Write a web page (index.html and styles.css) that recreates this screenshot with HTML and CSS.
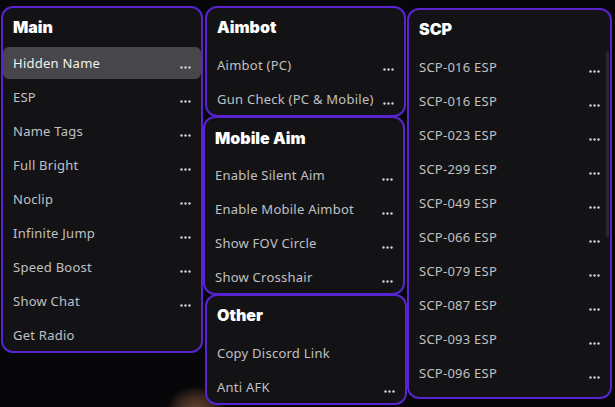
FILE: index.html
```html
<!DOCTYPE html>
<html lang="en">
<head>
    <meta charset="UTF-8">
    <title>Menu</title>
    <link rel="stylesheet" href="styles.css">
</head>
<body>
    <div class="menu">
        <div class="panel panel-main">
            <h3>Main</h3>
            <div class="opt active"><span>Hidden Name</span><svg class="more" viewBox="0 0 11 3"><circle cx="1.5" cy="1.5" r="1.2"/><circle cx="5.5" cy="1.5" r="1.2"/><circle cx="9.5" cy="1.5" r="1.2"/></svg></div>
            <div class="opt"><span>ESP</span><svg class="more" viewBox="0 0 11 3"><circle cx="1.5" cy="1.5" r="1.2"/><circle cx="5.5" cy="1.5" r="1.2"/><circle cx="9.5" cy="1.5" r="1.2"/></svg></div>
            <div class="opt"><span>Name Tags</span><svg class="more" viewBox="0 0 11 3"><circle cx="1.5" cy="1.5" r="1.2"/><circle cx="5.5" cy="1.5" r="1.2"/><circle cx="9.5" cy="1.5" r="1.2"/></svg></div>
            <div class="opt"><span>Full Bright</span><svg class="more" viewBox="0 0 11 3"><circle cx="1.5" cy="1.5" r="1.2"/><circle cx="5.5" cy="1.5" r="1.2"/><circle cx="9.5" cy="1.5" r="1.2"/></svg></div>
            <div class="opt"><span>Noclip</span><svg class="more" viewBox="0 0 11 3"><circle cx="1.5" cy="1.5" r="1.2"/><circle cx="5.5" cy="1.5" r="1.2"/><circle cx="9.5" cy="1.5" r="1.2"/></svg></div>
            <div class="opt"><span>Infinite Jump</span><svg class="more" viewBox="0 0 11 3"><circle cx="1.5" cy="1.5" r="1.2"/><circle cx="5.5" cy="1.5" r="1.2"/><circle cx="9.5" cy="1.5" r="1.2"/></svg></div>
            <div class="opt"><span>Speed Boost</span><svg class="more" viewBox="0 0 11 3"><circle cx="1.5" cy="1.5" r="1.2"/><circle cx="5.5" cy="1.5" r="1.2"/><circle cx="9.5" cy="1.5" r="1.2"/></svg></div>
            <div class="opt"><span>Show Chat</span><svg class="more" viewBox="0 0 11 3"><circle cx="1.5" cy="1.5" r="1.2"/><circle cx="5.5" cy="1.5" r="1.2"/><circle cx="9.5" cy="1.5" r="1.2"/></svg></div>
            <div class="opt"><span>Get Radio</span></div>
        </div>

        <div class="col">
            <div class="panel panel-aimbot">
                <h3>Aimbot</h3>
                <div class="opt"><span>Aimbot (PC)</span><svg class="more" viewBox="0 0 11 3"><circle cx="1.5" cy="1.5" r="1.2"/><circle cx="5.5" cy="1.5" r="1.2"/><circle cx="9.5" cy="1.5" r="1.2"/></svg></div>
                <div class="opt"><span>Gun Check (PC &amp; Mobile)</span><svg class="more" viewBox="0 0 11 3"><circle cx="1.5" cy="1.5" r="1.2"/><circle cx="5.5" cy="1.5" r="1.2"/><circle cx="9.5" cy="1.5" r="1.2"/></svg></div>
            </div>
            <div class="panel panel-mobile">
                <h3>Mobile Aim</h3>
                <div class="opt"><span>Enable Silent Aim</span><svg class="more" viewBox="0 0 11 3"><circle cx="1.5" cy="1.5" r="1.2"/><circle cx="5.5" cy="1.5" r="1.2"/><circle cx="9.5" cy="1.5" r="1.2"/></svg></div>
                <div class="opt"><span>Enable Mobile Aimbot</span><svg class="more" viewBox="0 0 11 3"><circle cx="1.5" cy="1.5" r="1.2"/><circle cx="5.5" cy="1.5" r="1.2"/><circle cx="9.5" cy="1.5" r="1.2"/></svg></div>
                <div class="opt"><span>Show FOV Circle</span><svg class="more" viewBox="0 0 11 3"><circle cx="1.5" cy="1.5" r="1.2"/><circle cx="5.5" cy="1.5" r="1.2"/><circle cx="9.5" cy="1.5" r="1.2"/></svg></div>
                <div class="opt"><span>Show Crosshair</span><svg class="more" viewBox="0 0 11 3"><circle cx="1.5" cy="1.5" r="1.2"/><circle cx="5.5" cy="1.5" r="1.2"/><circle cx="9.5" cy="1.5" r="1.2"/></svg></div>
            </div>
            <div class="panel panel-other">
                <h3>Other</h3>
                <div class="opt"><span>Copy Discord Link</span></div>
                <div class="opt"><span>Anti AFK</span><svg class="more" viewBox="0 0 11 3"><circle cx="1.5" cy="1.5" r="1.2"/><circle cx="5.5" cy="1.5" r="1.2"/><circle cx="9.5" cy="1.5" r="1.2"/></svg></div>
            </div>
        </div>

        <div class="panel panel-scp">
            <h3>SCP</h3>
            <div class="opt"><span>SCP-016 ESP</span><svg class="more" viewBox="0 0 11 3"><circle cx="1.5" cy="1.5" r="1.2"/><circle cx="5.5" cy="1.5" r="1.2"/><circle cx="9.5" cy="1.5" r="1.2"/></svg></div>
            <div class="opt"><span>SCP-016 ESP</span><svg class="more" viewBox="0 0 11 3"><circle cx="1.5" cy="1.5" r="1.2"/><circle cx="5.5" cy="1.5" r="1.2"/><circle cx="9.5" cy="1.5" r="1.2"/></svg></div>
            <div class="opt"><span>SCP-023 ESP</span><svg class="more" viewBox="0 0 11 3"><circle cx="1.5" cy="1.5" r="1.2"/><circle cx="5.5" cy="1.5" r="1.2"/><circle cx="9.5" cy="1.5" r="1.2"/></svg></div>
            <div class="opt"><span>SCP-299 ESP</span><svg class="more" viewBox="0 0 11 3"><circle cx="1.5" cy="1.5" r="1.2"/><circle cx="5.5" cy="1.5" r="1.2"/><circle cx="9.5" cy="1.5" r="1.2"/></svg></div>
            <div class="opt"><span>SCP-049 ESP</span><svg class="more" viewBox="0 0 11 3"><circle cx="1.5" cy="1.5" r="1.2"/><circle cx="5.5" cy="1.5" r="1.2"/><circle cx="9.5" cy="1.5" r="1.2"/></svg></div>
            <div class="opt"><span>SCP-066 ESP</span><svg class="more" viewBox="0 0 11 3"><circle cx="1.5" cy="1.5" r="1.2"/><circle cx="5.5" cy="1.5" r="1.2"/><circle cx="9.5" cy="1.5" r="1.2"/></svg></div>
            <div class="opt"><span>SCP-079 ESP</span><svg class="more" viewBox="0 0 11 3"><circle cx="1.5" cy="1.5" r="1.2"/><circle cx="5.5" cy="1.5" r="1.2"/><circle cx="9.5" cy="1.5" r="1.2"/></svg></div>
            <div class="opt"><span>SCP-087 ESP</span><svg class="more" viewBox="0 0 11 3"><circle cx="1.5" cy="1.5" r="1.2"/><circle cx="5.5" cy="1.5" r="1.2"/><circle cx="9.5" cy="1.5" r="1.2"/></svg></div>
            <div class="opt"><span>SCP-093 ESP</span><svg class="more" viewBox="0 0 11 3"><circle cx="1.5" cy="1.5" r="1.2"/><circle cx="5.5" cy="1.5" r="1.2"/><circle cx="9.5" cy="1.5" r="1.2"/></svg></div>
            <div class="opt"><span>SCP-096 ESP</span><svg class="more" viewBox="0 0 11 3"><circle cx="1.5" cy="1.5" r="1.2"/><circle cx="5.5" cy="1.5" r="1.2"/><circle cx="9.5" cy="1.5" r="1.2"/></svg></div>
            <div class="scrollbar"></div>
        </div>
    </div>
</body>
</html>
```

FILE: styles.css
```css
body {
    margin: 0;
    font-family: 'Noto Sans', 'DejaVu Sans', sans-serif;
    background: radial-gradient(ellipse 30px 26px at 196px 412px, #6b4a36 0%, #3a281e 60%, rgba(7,7,9,0) 100%), #070709;
    height: 407px;
    overflow: hidden;
}
.menu {
    display: flex;
    align-items: flex-start;
    padding-left: 1px;
}
.col {
    display: flex;
    flex-direction: column;
    width: 204px;
}
.panel {
    box-sizing: border-box;
    display: flex;
    flex-direction: column;
    gap: 2px;
    background: #131316;
    border: 2px solid #5824d0;
    border-radius: 12px;
    position: relative;
}
h3 {
    margin: 0 0 10px 0;
    padding: 9px 10px 0 10px;
    line-height: 20px;
    height: 20px;
    font-family: Inter, 'Noto Sans', sans-serif;
    font-weight: 900;
    font-size: 16px;
    color: #fff;
}
.panel-main {
    width: 202px;
    margin-top: 6px;
}
.panel-main h3 {
    margin-bottom: 8px;
}
.panel-aimbot {
    width: 201px;
    margin: 6px 0 0 2px;
}
.panel-mobile {
    width: 202px;
    margin-top: -1px;
}
.panel-mobile h3 {
    padding-top: 10px;
    margin-bottom: 9px;
}
.panel-other {
    width: 202px;
    margin: -1px 0 0 2px;
}
.panel-scp {
    width: 205px;
    margin-top: 8px;
    padding-bottom: 8px;
}
.opt {
    display: flex;
    align-items: center;
    justify-content: space-between;
    height: 32px;
    padding: 0 10px 0 10px;
    font-size: 13px;
    letter-spacing: 0.25px;
    color: #c0c0c3;
    border-radius: 6px;
}
.opt.active {
    background: #47474b;
    color: #f2f2f2;
}
.more {
    width: 11px;
    height: 3px;
    fill: #d2d2d4;
    margin-top: 8px;
    flex-shrink: 0;
}
.scrollbar {
    position: absolute;
    right: 1px;
    top: 41px;
    width: 3px;
    height: 186px;
    background: #28282d;
    border-radius: 2px;
}
```
